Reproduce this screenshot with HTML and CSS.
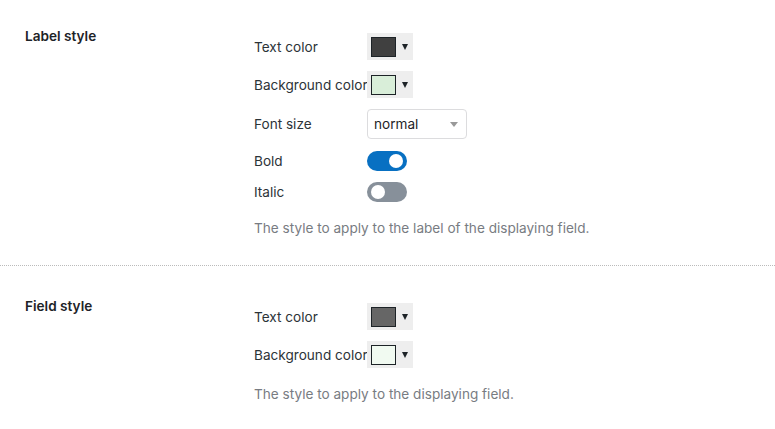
FILE: index.html
```html
<!DOCTYPE html>
<html lang="en">
<head>
    <meta charset="UTF-8">
    <meta name="viewport" content="width=device-width, initial-scale=1.0">
    <title>Field Display Settings</title>
    <link rel="stylesheet" href="styles.css">
</head>
<body>
    <!-- Label style -->
    <div class="section section-first">
        <div class="section-title">Label style</div>
        <div class="section-body">
            <div class="row">
                <span class="row-label">Text color</span>
                <button type="button" class="color-picker">
                    <span class="swatch swatch-dark"></span>
                    <span class="caret"></span>
                </button>
            </div>
            <div class="row">
                <span class="row-label">Background color</span>
                <button type="button" class="color-picker">
                    <span class="swatch swatch-mint"></span>
                    <span class="caret"></span>
                </button>
            </div>
            <div class="row row-select">
                <span class="row-label">Font size</span>
                <div class="select-box">
                    <span>normal</span>
                    <span class="select-arrow"></span>
                </div>
            </div>
            <div class="row row-toggle">
                <span class="row-label">Bold</span>
                <span class="toggle on"><span class="knob"></span></span>
            </div>
            <div class="row row-toggle">
                <span class="row-label">Italic</span>
                <span class="toggle"><span class="knob"></span></span>
            </div>
            <p class="description">The style to apply to the label of the displaying field.</p>
        </div>
    </div>

    <!-- Field style -->
    <div class="section section-last">
        <div class="section-title">Field style</div>
        <div class="section-body">
            <div class="row">
                <span class="row-label">Text color</span>
                <button type="button" class="color-picker">
                    <span class="swatch swatch-gray"></span>
                    <span class="caret"></span>
                </button>
            </div>
            <div class="row">
                <span class="row-label">Background color</span>
                <button type="button" class="color-picker">
                    <span class="swatch swatch-pale"></span>
                    <span class="caret"></span>
                </button>
            </div>
            <p class="description">The style to apply to the displaying field.</p>
        </div>
    </div>
</body>
</html>
```

FILE: styles.css
```css
body {
    margin: 0;
    padding: 0;
    background: #fff;
    color: #1d2327;
    font-family: Inter, "Noto Sans", sans-serif;
    font-size: 13.6px;
}

/* Settings Sections */
.section {
    display: flex;
    padding: 27px 0 27px;
}

.section-first {
    border-bottom: 1px dotted #bbb;
}

.section-last {
    padding-top: 31px;
}

.section-title {
    width: 229px;
    padding-left: 25px;
    font-weight: 600;
    line-height: 18px;
}

.section-body {
    flex: 1;
    margin-top: 6px;
}

/* Rows */
.row {
    display: flex;
    align-items: center;
    height: 27px;
    margin-bottom: 11px;
}

.row-select {
    height: 30px;
    margin-bottom: 12px;
}

.row-toggle {
    height: 20px;
}

.row-label {
    width: 113px;
    white-space: nowrap;
    color: #2c3338;
}

/* Color Picker */
.color-picker {
    display: flex;
    align-items: center;
    width: 46px;
    height: 27px;
    padding: 0 0 0 4px;
    border: none;
    background: #eeeeee;
    cursor: pointer;
}

.swatch {
    width: 25px;
    height: 20px;
    box-sizing: border-box;
    border: 1px solid #1d2327;
}

.swatch-dark { background: #404040; }
.swatch-mint { background: #d9eed9; }
.swatch-gray { background: #666666; }
.swatch-pale { background: #f1faf1; }

.caret {
    width: 0;
    height: 0;
    margin-left: 6px;
    border-left: 3px solid transparent;
    border-right: 3px solid transparent;
    border-top: 6px solid #1d2327;
}

/* Select */
.select-box {
    display: flex;
    align-items: center;
    justify-content: space-between;
    box-sizing: border-box;
    width: 100px;
    height: 30px;
    padding: 0 8px 0 6px;
    border: 1px solid #dcdcde;
    border-radius: 4px;
    color: #1d2327;
}

.select-arrow {
    width: 0;
    height: 0;
    border-left: 4px solid transparent;
    border-right: 4px solid transparent;
    border-top: 5px solid #999;
}

/* Toggle Switch */
.toggle {
    position: relative;
    width: 40px;
    height: 20px;
    border-radius: 10px;
    background: #87909a;
}

.toggle.on {
    background: #0870c2;
}

.knob {
    position: absolute;
    top: 3px;
    left: 4px;
    width: 14px;
    height: 14px;
    border-radius: 50%;
    background: #fff;
}

.toggle.on .knob {
    left: 22px;
}

/* Description */
.description {
    margin: 16px 0 0;
    line-height: 20px;
    color: #787c82;
}
```
